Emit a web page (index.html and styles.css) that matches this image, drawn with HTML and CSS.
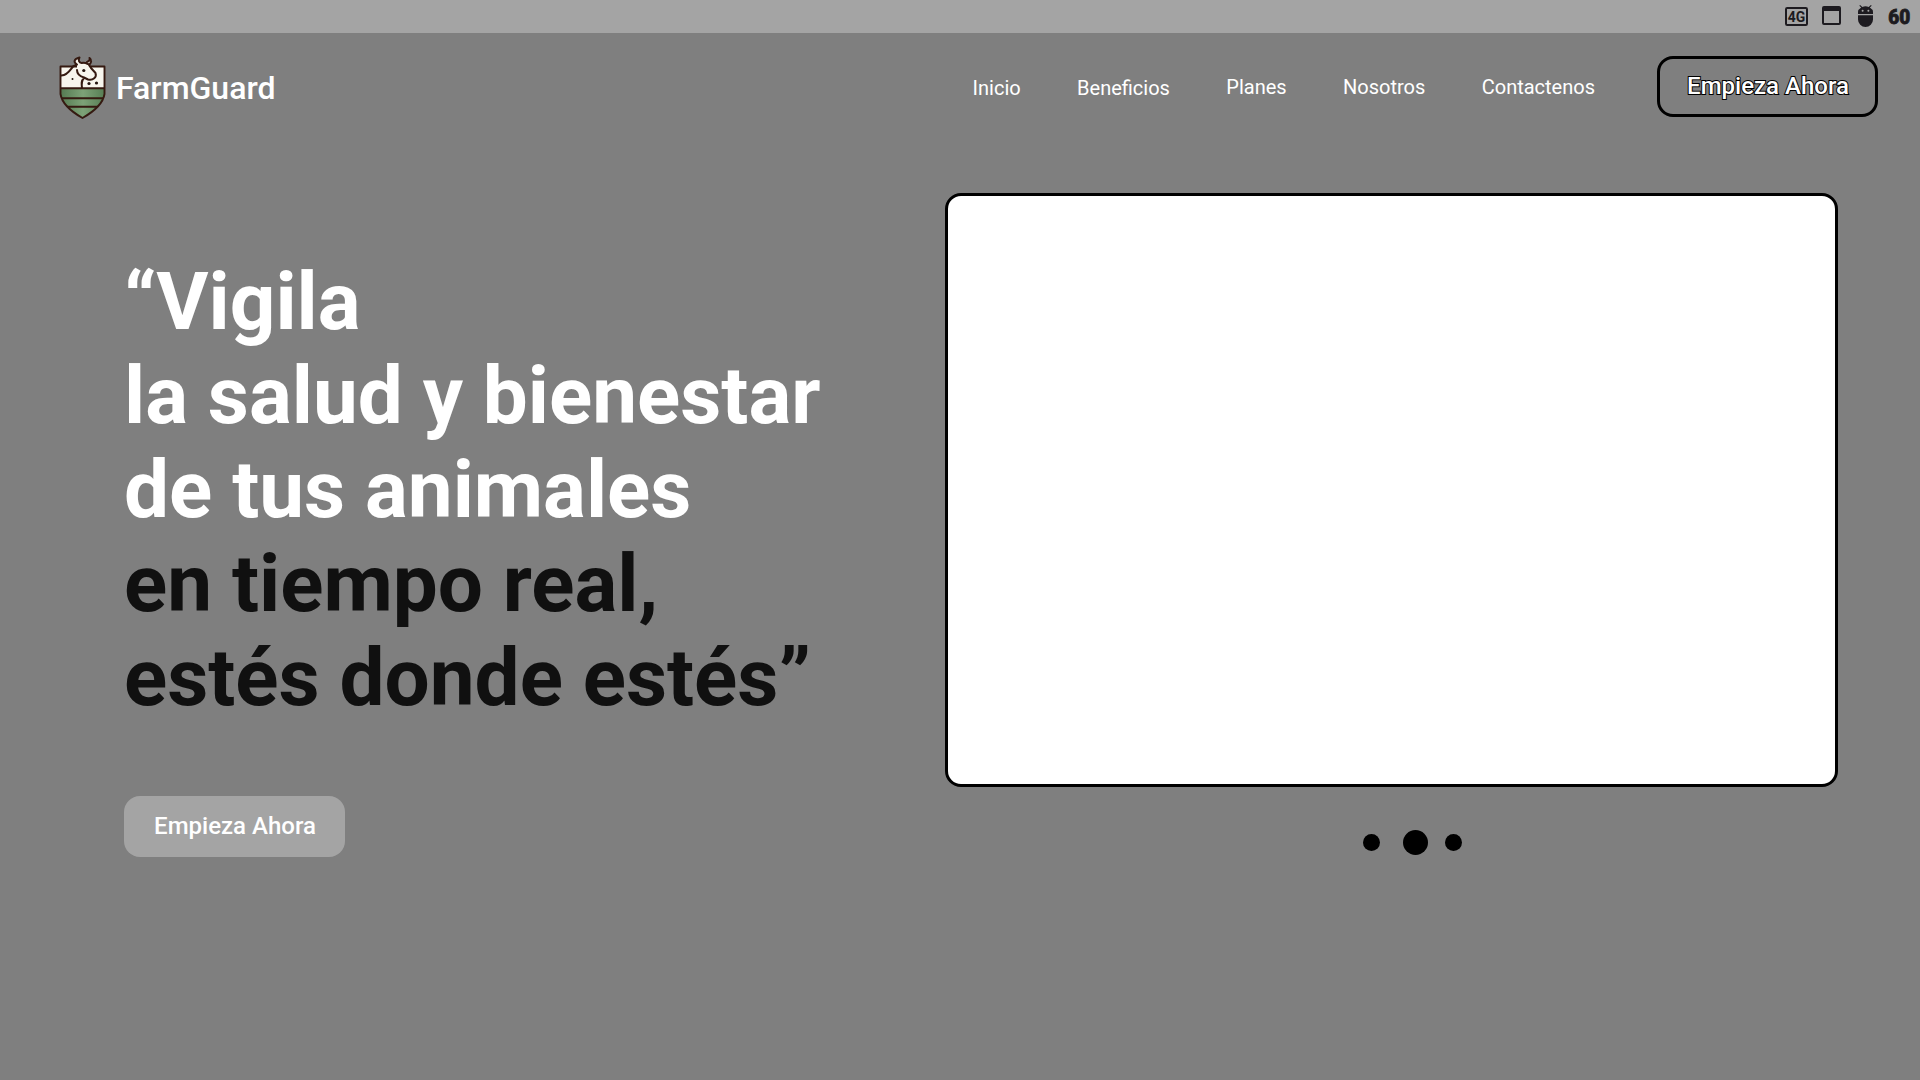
FILE: index.html
```html
<!DOCTYPE html>
<html lang="es">
<head>
<meta charset="utf-8">
<title>FarmGuard</title>
<link rel="stylesheet" href="styles.css">
</head>
<body>
<div class="status-bar">
  <svg class="icon-4g" width="23" height="19" viewBox="0 0 23 19">
    <rect x="1" y="1" width="21" height="17" rx="1.2" fill="none" stroke="#1d1b20" stroke-width="2"/>
    <text class="status-text" x="2.800" y="14.800" font-size="15.500" textLength="17.500" lengthAdjust="spacingAndGlyphs">4G</text>
  </svg>
  <svg class="icon-window" width="19" height="19" viewBox="0 0 19 19">
    <path fill="#1d1b20" fill-rule="evenodd" d="M2 0H17Q19 0 19 2V17Q19 19 17 19H2Q0 19 0 17V2Q0 0 2 0ZM2 5V17H17V5Z"/>
  </svg>
  <svg class="icon-android" width="15" height="22" viewBox="0 0 15 22">
    <path fill="#1d1b20" d="M0 9V7.5A7.5 6 0 0 1 3.2 2.4L1.3 .7 2.1 0 4.3 1.9A7.5 7 0 0 1 10.7 1.9L12.9 0 13.7 .7 11.8 2.4A7.5 6 0 0 1 15 7.5V9ZM0 10.3H15V14.5A7.5 7.5 0 0 1 0 14.5Z"/>
    <circle cx="4.6" cy="5.8" r="1" fill="#a4a4a4"/><circle cx="10.4" cy="5.8" r="1" fill="#a4a4a4"/>
  </svg>
  <svg class="icon-60" width="24" height="28" viewBox="0 0 24 28">
    <text class="status-text status-text-heavy" x="0.300" y="19.600" font-size="20.500" textLength="22" lengthAdjust="spacingAndGlyphs">60</text>
  </svg>
</div>
<header class="header">
  <a class="brand">
    <svg class="logo" width="48" height="63" viewBox="0 0 48 63">
      <defs>
        <clipPath id="shield"><path d="M1.5 10.5H45.5V38C44 48 34 56 23.5 62 13 56 3 48 1.5 38Z"/></clipPath>
        <linearGradient id="field" x1="0" x2="1" y1="0" y2="0"><stop offset="0" stop-color="#52774f"/><stop offset=".5" stop-color="#7da277"/><stop offset="1" stop-color="#527950"/></linearGradient>
      </defs>
      <g clip-path="url(#shield)">
        <rect y="9" width="48" height="25" fill="#f7f5ed"/>
        <rect y="32" width="48" height="31" fill="url(#field)"/>
        <path d="M0 32.3H48M0 42.3H48M0 50.8H48" stroke="#351a11" stroke-width="1.9"/>
      </g>
      <path d="M1.5 10.5H45.5V38C44 48 34 56 23.5 62 13 56 3 48 1.5 38Z" fill="none" stroke="#351a11" stroke-width="1.9" stroke-linejoin="round"/>
      <path d="M18 8C14 6 15 3 20 1.5V5C20 7 22 7.500 25 7.500L28 6C31 5 31 3 31 2 34 4 32 7 30 9L32 12 36 17C38 21 35 24 31 23L25 22C21 21 19 18 18 15Z" fill="#f7f5ed"/>
      <path d="M2.500 19.500C9 19 11 14 14 10.500L18 8.500C14 6 15 3 20.500 1.500 19 4 20 7 22.500 7 25 6 27 7 29 8M28 6C31 5 31 3 30.500 2 33.500 4 32 7 30 9M18 14C18 17 20 20 25 21.500L29 23.500C34 25 38 21 36.500 17L32 12 30 9M25 22C22 25 22.500 28 23 32" fill="none" stroke="#351a11" stroke-width="2" stroke-linecap="round" stroke-linejoin="round"/>
      <g fill="#24150f"><circle cx="24.800" cy="14.500" r="1.600"/><circle cx="13.500" cy="23" r="1"/><circle cx="30" cy="27.500" r="1.600"/><circle cx="37.500" cy="27" r="1.600"/></g>
    </svg>
    <span class="brand-name">FarmGuard</span>
  </a>
  <nav class="nav">
    <a class="nav-link nav-link-low">Inicio</a>
    <a class="nav-link nav-link-low">Beneficios</a>
    <a class="nav-link">Planes</a>
    <a class="nav-link">Nosotros</a>
    <a class="nav-link">Contactenos</a>
  </nav>
  <a class="button button-outline">Empieza Ahora</a>
</header>
<main class="hero">
  <section class="intro">
    <h1 class="title">“Vigila<br>la salud y bienestar<br>de tus animales<br><span class="title-dark">en tiempo real,<br>estés donde estés”</span></h1>
    <a class="button button-solid">Empieza Ahora</a>
  </section>
  <section class="carousel">
    <div class="slide"></div>
    <div class="dots">
      <span class="dot"></span><span class="dot dot-active"></span><span class="dot"></span>
    </div>
  </section>
</main>
</body>
</html>
```
FILE: styles.css
```css
* { box-sizing: border-box; }
body {
  margin: 0;
  height: 1080px;
  overflow: hidden;
  background: #7f7f7f;
  color: #fff;
  font-family: Roboto, sans-serif;
}
svg { display: block; flex: none; }
.status-bar {
  display: flex;
  justify-content: flex-end;
  align-items: flex-start;
  height: 33px;
  padding: 4px 8px 0 0;
  background: #a4a4a4;
}
.status-text { font-family: Roboto, sans-serif; font-weight: 700; fill: #1d1b20; }
.status-text-heavy { font-weight: 900; stroke: #1d1b20; stroke-width: 0.8px; }
.icon-4g { margin: 3px 14px 0 0; }
.icon-window { margin: 2px 17px 0 0; }
.icon-android { margin: 1px 15px 0 0; }
.header {
  display: flex;
  align-items: flex-start;
  height: 160px;
  padding: 23px 42px 0 59px;
}
.brand { display: flex; }
.brand-name {
  margin: 13px 0 0 9px;
  font-size: 32px;
  line-height: 38px;
  font-weight: 500;
}
.nav {
  display: flex;
  gap: 56.4px;
  margin: 19px 62px 0 auto;
}
.nav-link { font-size: 20px; line-height: 24px; }
.nav-link-low { margin-top: 1px; }
.button {
  display: flex;
  justify-content: center;
  width: 221px;
  height: 61px;
  border-radius: 16px;
  font-size: 24px;
  line-height: 28px;
  font-weight: 500;
}
.button-outline {
  padding: 13px 0 0 1px;
  border: 3px solid #000;
  -webkit-text-stroke: 2px #000;
  paint-order: stroke fill;
}
.button-solid { padding: 16px 0 0 1px; background: #a4a4a4; }
.hero {
  display: flex;
  justify-content: space-between;
  padding: 0 82px 0 124px;
}
.intro { padding-top: 62px; }
.title {
  margin: 0 0 71px;
  font-size: 80px;
  line-height: 94px;
  font-weight: 700;
  white-space: nowrap;
}
.title-dark { color: #101010; }
.carousel { width: 893px; }
.slide {
  height: 594px;
  border: 3px solid #000;
  border-radius: 16px;
  background: #fff;
}
.dots {
  display: flex;
  align-items: center;
  padding: 43px 0 0 418px;
}
.dot { width: 17px; height: 17px; border-radius: 50%; background: #000; }
.dot-active { width: 25px; height: 25px; margin: 0 17px 0 23px; }
```
